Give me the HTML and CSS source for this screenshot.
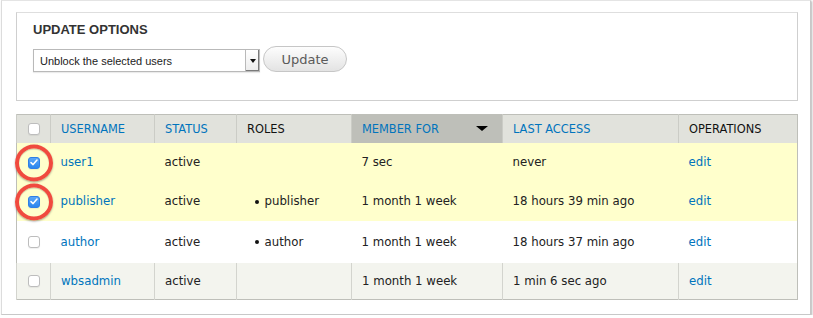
FILE: index.html
```html
<!DOCTYPE html>
<html lang="en">
<head>
    <meta charset="UTF-8">
    <meta name="viewport" content="width=device-width, initial-scale=1.0">
    <title>People</title>
    <link rel="stylesheet" href="styles.css">
</head>
<body>
    <div class="window">
        <div class="options">
            <h2>Update options</h2>
            <div class="controls">
                <div class="select">
                    <select>
                        <option>Unblock the selected users</option>
                        <option>Block the selected users</option>
                        <option>Cancel the selected user accounts</option>
                    </select>
                    <span class="select-arrow"></span>
                </div>
                <button class="update-button">Update</button>
            </div>
        </div>

        <table class="users">
            <thead>
                <tr>
                    <th class="select-col"><span class="checkbox"></span></th>
                    <th class="col-user"><a href="#">Username</a></th>
                    <th class="col-status"><a href="#">Status</a></th>
                    <th class="col-roles">Roles</th>
                    <th class="col-member active">
                        <div class="th-inner"><a href="#">Member for</a><span class="sort-arrow"></span></div>
                    </th>
                    <th class="col-access"><a href="#">Last access</a></th>
                    <th>Operations</th>
                </tr>
            </thead>
            <tbody>
                <tr class="selected">
                    <td class="select-col">
                        <span class="mark">
                            <span class="checkbox checked"><svg width="8" height="7" viewBox="0 0 8 7"><path d="M1 3.6 L3.1 5.6 L7 1" fill="none" stroke="#fff" stroke-width="1.5" stroke-linecap="round" stroke-linejoin="round"/></svg></span>
                            <span class="ring"></span>
                        </span>
                    </td>
                    <td><a href="#">user1</a></td>
                    <td>active</td>
                    <td></td>
                    <td>7 sec</td>
                    <td>never</td>
                    <td><a href="#">edit</a></td>
                </tr>
                <tr class="selected">
                    <td class="select-col">
                        <span class="mark">
                            <span class="checkbox checked"><svg width="8" height="7" viewBox="0 0 8 7"><path d="M1 3.6 L3.1 5.6 L7 1" fill="none" stroke="#fff" stroke-width="1.5" stroke-linecap="round" stroke-linejoin="round"/></svg></span>
                            <span class="ring"></span>
                        </span>
                    </td>
                    <td><a href="#">publisher</a></td>
                    <td>active</td>
                    <td><ul class="roles"><li>publisher</li></ul></td>
                    <td>1 month 1 week</td>
                    <td>18 hours 39 min ago</td>
                    <td><a href="#">edit</a></td>
                </tr>
                <tr class="odd">
                    <td class="select-col"><span class="checkbox"></span></td>
                    <td><a href="#">author</a></td>
                    <td>active</td>
                    <td><ul class="roles"><li>author</li></ul></td>
                    <td>1 month 1 week</td>
                    <td>18 hours 37 min ago</td>
                    <td><a href="#">edit</a></td>
                </tr>
                <tr class="even">
                    <td class="select-col"><span class="checkbox"></span></td>
                    <td><a href="#">wbsadmin</a></td>
                    <td>active</td>
                    <td></td>
                    <td>1 month 1 week</td>
                    <td>1 min 6 sec ago</td>
                    <td><a href="#">edit</a></td>
                </tr>
            </tbody>
        </table>
    </div>
</body>
</html>
```

FILE: styles.css
```css
* {
    margin: 0;
    padding: 0;
    box-sizing: border-box;
}

body {
    font-family: "DejaVu Sans", sans-serif;
    font-size: 11.75px;
    color: #222;
    background: #fff;
}

a {
    color: #0074bd;
    text-decoration: none;
}

.window {
    width: 810px;
    height: 315px;
    margin-left: 1px;
    padding: 11px 14px 0;
    border: 1px solid #c8c8c8;
    border-top-color: #e4e4e4;
    border-left-color: #dcdcdc;
    box-shadow: 1px 1px 2px rgba(0,0,0,0.3);
}

/* update options box */
.options {
    width: 782px;
    height: 89px;
    padding: 9px 16px 0;
    border: 1px solid #cfcfcf;
    border-top-color: #dedede;
}

.options h2 {
    font-family: "Liberation Sans", sans-serif;
    font-size: 13px;
    font-weight: bold;
    line-height: 16px;
    color: #333;
    text-transform: uppercase;
    margin-bottom: 8px;
}

.controls {
    display: flex;
    align-items: flex-start;
    gap: 3px;
}

.select {
    display: flex;
    width: 227px;
    height: 23px;
    margin-top: 3px;
    border: 1px solid #b9b9b9;
    background: #fff;
    box-shadow: 0 1px 1px rgba(0,0,0,0.08);
}

.select select {
    flex: 1;
    appearance: none;
    -webkit-appearance: none;
    border: none;
    outline: none;
    background: transparent;
    font-family: "Liberation Sans", sans-serif;
    font-size: 11px;
    color: #222;
    padding-left: 6px;
}

.select-arrow {
    width: 14px;
    display: flex;
    align-items: center;
    justify-content: center;
    border-left: 1px solid #b9b9b9;
    background: linear-gradient(#fff, #ececec);
    box-shadow: inset -1px -1px 0 #7a7a7a;
}

.select-arrow::after {
    content: "";
    border-left: 3px solid transparent;
    border-right: 3px solid transparent;
    border-top: 4px solid #111;
}

.update-button {
    width: 84px;
    height: 26px;
    border: 1px solid #c6c6c6;
    border-radius: 13px;
    background: linear-gradient(#fdfdfd, #e3e3e3);
    font-family: "DejaVu Sans", sans-serif;
    font-size: 13px;
    color: #5a5a5a;
    cursor: pointer;
}

/* users table */
.users {
    width: 782px;
    margin-top: 13px;
    border-collapse: collapse;
    table-layout: fixed;
    border: 1px solid #bebfb9;
}

.users th {
    height: 28px;
    padding: 0 10px;
    background: #e1e2dc;
    border-left: 1px solid #cbccc6;
    font-size: 11.4px;
    font-weight: normal;
    text-align: left;
    text-transform: uppercase;
    color: #111;
}

.users th.active {
    background: #bebfb9;
}

.th-inner {
    display: flex;
    align-items: center;
    justify-content: space-between;
    padding-right: 4px;
}

.sort-arrow {
    border-left: 6px solid transparent;
    border-right: 6px solid transparent;
    border-top: 5px solid #000;
}

.select-col { width: 34px; }
.col-user { width: 104px; }
.col-status { width: 82px; }
.col-roles { width: 115px; }
.col-member { width: 151px; }
.col-access { width: 176px; }

.users td {
    height: 39px;
    padding: 0 10px;
    color: #222;
}

.users .select-col {
    padding: 0;
    text-align: center;
}

.users tr.selected td {
    background: #ffffcc;
}

.users tr.odd td {
    height: 42px;
    background: #fff;
}

.users tr.even td {
    height: 37px;
    background: #f3f4ee;
    border-left: 1px solid #d3d4ce;
}

.roles {
    list-style: none;
    padding-left: 8px;
}

.roles li::before {
    content: "";
    display: inline-block;
    width: 4px;
    height: 4px;
    margin-right: 6px;
    border-radius: 50%;
    background: #111;
    vertical-align: middle;
}

.checkbox {
    display: inline-flex;
    align-items: center;
    justify-content: center;
    width: 12px;
    height: 12px;
    border: 1px solid #bdbdbd;
    border-radius: 3px;
    background: #fff;
    box-shadow: 0 1px 1px rgba(0,0,0,0.06);
    vertical-align: middle;
}

.checkbox.checked {
    border-color: #2f7fe6;
    background: linear-gradient(#5ba7f7, #2a86ee);
}

.mark {
    position: relative;
    display: inline-block;
    vertical-align: middle;
    line-height: 0;
}

.ring {
    position: absolute;
    left: 50%;
    top: 50%;
    width: 38px;
    height: 37px;
    transform: translate(-50%, -50%);
    border: 4px solid #f04a3f;
    border-radius: 50%;
    box-shadow: 0 1px 2px rgba(0,0,0,0.35), inset 0 1px 1px rgba(0,0,0,0.2);
}
```
